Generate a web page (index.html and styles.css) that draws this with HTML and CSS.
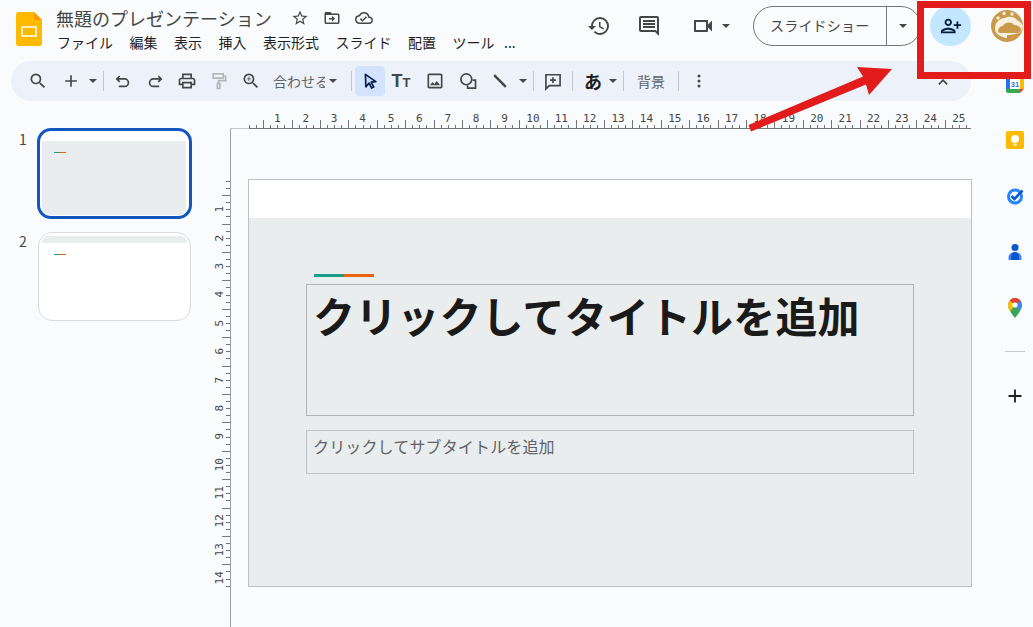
FILE: index.html
```html
<!DOCTYPE html>
<html lang="ja">
<head>
    <meta charset="UTF-8">
    <meta name="viewport" content="width=device-width, initial-scale=1.0">
    <title>無題のプレゼンテーション</title>
    <link rel="stylesheet" href="styles.css">
</head>
<body>
    <header class="header">
        <svg class="logo" viewBox="0 0 26 34">
            <path fill="#ffba00" d="M3 0h15l8 8v23a3 3 0 0 1-3 3H3a3 3 0 0 1-3-3V3a3 3 0 0 1 3-3z"/>
            <path fill="#f79a00" d="M18 0l8 8h-8z"/>
            <rect x="6" y="15" width="14" height="9" fill="none" stroke="#ffeeb8" stroke-width="2"/>
        </svg>
        <div class="doc-info">
            <div class="doc-title-row">
                <span class="doc-title">無題のプレゼンテーション</span>
                <svg class="doc-icon doc-icon-first" viewBox="0 0 24 24"><path d="M22 9.24l-7.19-.62L12 2 9.19 8.63 2 9.24l5.46 4.73L5.82 21 12 17.27 18.18 21l-1.63-7.03L22 9.24zM12 15.4l-3.76 2.27 1-4.28-3.32-2.88 4.38-.38L12 6.1l1.71 4.04 4.38.38-3.32 2.88 1 4.28L12 15.4z"/></svg>
                <svg class="doc-icon" viewBox="0 0 24 24"><path d="M20 6h-8l-2-2H4c-1.1 0-2 .9-2 2v12c0 1.1.9 2 2 2h16c1.1 0 2-.9 2-2V8c0-1.1-.9-2-2-2zm0 12H4V8h16v10zM12 9l4 4-4 4v-3H8v-2h4z"/></svg>
                <svg class="doc-icon" viewBox="0 0 24 24"><path d="M19.35 10.04A7.49 7.49 0 0 0 12 4C9.11 4 6.6 5.64 5.35 8.04A5.994 5.994 0 0 0 0 14c0 3.31 2.69 6 6 6h13c2.76 0 5-2.24 5-5 0-2.64-2.05-4.78-4.65-4.96zM19 18H6c-2.21 0-4-1.79-4-4 0-2.05 1.53-3.76 3.56-3.97l1.07-.11.5-.95A5.469 5.469 0 0 1 12 6c2.62 0 4.88 1.86 5.39 4.43l.3 1.5 1.53.11A2.98 2.98 0 0 1 22 15c0 1.65-1.35 3-3 3zm-9-3.82l-2.09-2.09L6.5 13.5 10 17l6.01-6.01-1.41-1.41z"/></svg>
            </div>
            <nav class="menu">
                <span>ファイル</span>
                <span>編集</span>
                <span>表示</span>
                <span>挿入</span>
                <span>表示形式</span>
                <span>スライド</span>
                <span>配置</span>
                <span>ツール</span>
                <span class="menu-more">...</span>
            </nav>
        </div>
        <div class="header-actions">
            <svg class="action-icon" viewBox="0 0 24 24"><path d="M13 3a9 9 0 0 0-9 9H1l3.89 3.89.07.14L9 12H6c0-3.87 3.13-7 7-7s7 3.13 7 7-3.13 7-7 7c-1.93 0-3.68-.79-4.94-2.06l-1.42 1.42A8.954 8.954 0 0 0 13 21a9 9 0 0 0 0-18zm-1 5v5l4.28 2.54.72-1.21-3.5-2.08V8H12z"/></svg>
            <svg class="action-icon action-comment" viewBox="0 0 24 24"><path d="M20 4v13.17L18.83 16H4V4h16m0-2H4c-1.1 0-2 .9-2 2v12c0 1.1.9 2 2 2h14l4 4V4c0-1.1-.9-2-2-2zM6 12h12v2H6zM6 9h12v2H6zM6 6h12v2H6z"/></svg>
            <svg class="action-icon action-video" viewBox="0 0 24 24"><path d="M15 8v8H5V8h10m1-2H4c-.55 0-1 .45-1 1v10c0 .55.45 1 1 1h12c.55 0 1-.45 1-1v-3.5l4 4v-11l-4 4V7c0-.55-.45-1-1-1z"/></svg>
            <span class="caret action-caret"></span>
            <div class="slideshow">
                <span class="slideshow-label">スライドショー</span>
                <span class="slideshow-more"><span class="caret"></span></span>
            </div>
            <div class="share">
                <svg viewBox="0 0 24 24"><path transform="matrix(-1 0 0 1 24 0)" d="M15 12c2.21 0 4-1.79 4-4s-1.79-4-4-4-4 1.79-4 4 1.79 4 4 4zm0-6c1.1 0 2 .9 2 2s-.9 2-2 2-2-.9-2-2 .9-2 2-2zm0 8c-2.67 0-8 1.34-8 4v2h16v-2c0-2.66-5.33-4-8-4zm-6 4c.22-.72 3.31-2 6-2 2.7 0 5.8 1.29 6 2H9zm-3-3v-3h3v-2H6V7H4v3H1v2h3v3h2z"/></svg>
            </div>
            <svg class="avatar" viewBox="0 0 32 32">
                <circle cx="16" cy="16" r="16" fill="#c99a4b"/>
                <circle cx="7" cy="8" r="1.700" fill="#f8f0de"/>
                <circle cx="13" cy="3.500" r="1.700" fill="#f8f0de"/>
                <circle cx="21" cy="4" r="1.700" fill="#f8f0de"/>
                <path fill="#f8f0de" d="M4 19c0-7 5-11 10-11 3-2 9-2 12 2 2 1 5 3 6 6l-2 6-6 4c-4 2-9 3-12 1-4-1-8-4-8-8z"/>
                <path fill="#c99a4b" d="M7 21c0-3 3-5 5-5 1-4 9-5 11-1 3 0 7 1 7 5 0 2-2 3-4 3H11c-2 0-4-0-4-2z"/>
                <path fill="#c99a4b" d="M16 25c4 0 10-1 14-3-2 6-8 9-14 9z"/>
            </svg>
        </div>
    </header>

    <div class="app">
        <div class="main">
            <div class="toolbar">
                <span class="tool"><svg viewBox="0 0 24 24"><path d="M15.5 14h-.79l-.28-.27A6.471 6.471 0 0 0 16 9.5 6.5 6.5 0 1 0 9.5 16c1.61 0 3.09-.59 4.23-1.57l.27.28v.79l5 4.99L20.49 19l-4.99-5zm-6 0C7.01 14 5 11.99 5 9.5S7.01 5 9.5 5 14 7.01 14 9.5 11.99 14 9.5 14z"/></svg></span>
                <span class="tool tool-add"><svg viewBox="0 0 24 24"><path d="M19 13h-6v6h-2v-6H5v-2h6V5h2v6h6v2z"/></svg></span>
                <span class="tool-caret"><span class="caret"></span></span>
                <span class="sep"></span>
                <span class="tool"><svg class="stroke-icon" viewBox="0 0 24 24"><path d="M8 6L4.5 9.5 8 13M5 9.5h9a4.5 4.5 0 0 1 0 9H7"/></svg></span>
                <span class="tool"><svg class="stroke-icon" viewBox="0 0 24 24"><path d="M16 6l3.500 3.500L16 13M19 9.500h-9a4.500 4.500 0 0 0 0 9h7"/></svg></span>
                <span class="tool"><svg viewBox="0 0 24 24"><path d="M19 8h-1V3H6v5H5c-1.660 0-3 1.340-3 3v6h4v4h12v-4h4v-6c0-1.660-1.340-3-3-3zM8 5h8v3H8V5zm8 12v2H8v-4h8v2zm2-2v-2H6v2H4v-4c0-.55.45-1 1-1h14c.55 0 1 .45 1 1v4h-2z"/></svg></span>
                <span class="tool tool-disabled"><svg class="stroke-icon" viewBox="0 0 24 24"><path d="M5 3.500h12v5H5zM17 6h3v5.500h-8.500V15M10 15h3v6h-3z"/></svg></span>
                <span class="tool"><svg viewBox="0 0 24 24"><path d="M15.500 14h-.79l-.28-.27A6.471 6.471 0 0 0 16 9.500 6.500 6.500 0 1 0 9.500 16c1.610 0 3.090-.59 4.230-1.570l.27.28v.79l5 4.990L20.490 19l-4.990-5zm-6 0C7.010 14 5 11.990 5 9.500S7.010 5 9.500 5 14 7.010 14 9.500 11.990 14 9.500 14zM12 10h-2v2H9v-2H7V9h2V7h1v2h2v1z"/></svg></span>
                <span class="zoom-label">合わせる</span>
                <span class="tool-caret tool-caret-zoom"><span class="caret"></span></span>
                <span class="sep sep-wide"></span>
                <span class="tool tool-select"><svg viewBox="0 0 24 24"><path fill="#c2d7fa" stroke="#041e49" stroke-width="2" stroke-linejoin="round" d="M6.500 4l.5 15 4-4.500 3 6 2.500-1.200-3-6 5.500-.5z"/></svg></span>
                <span class="tool tool-text"><span class="text-big">T</span><span class="text-small">T</span></span>
                <span class="tool tool-image"><svg viewBox="0 0 24 24"><path d="M19 5v14H5V5h14m0-2H5c-1.100 0-2 .9-2 2v14c0 1.100.9 2 2 2h14c1.100 0 2-.9 2-2V5c0-1.100-.9-2-2-2zm-4.860 8.860l-3 3.870L9 13.140 6 17h12l-3.860-5.140z"/></svg></span>
                <span class="tool tool-shape"><svg class="stroke-icon" viewBox="0 0 24 24"><circle cx="10" cy="10" r="6.500"/><path d="M17.500 11H21v9.500h-9.500V17"/></svg></span>
                <span class="tool"><svg class="stroke-icon" viewBox="0 0 24 24"><path class="line-tool" d="M5 5l14 14"/></svg></span>
                <span class="tool-caret tool-caret-line"><span class="caret"></span></span>
                <span class="sep"></span>
                <span class="tool"><svg class="stroke-icon" viewBox="0 0 24 24"><path d="M3.500 4.500h17v13H7.500l-4 4zM12 7.500v7M8.500 11h7"/></svg></span>
                <span class="sep sep-tight"></span>
                <span class="tool tool-lang">あ</span>
                <span class="tool-caret tool-caret-lang"><span class="caret"></span></span>
                <span class="sep sep-before-bg"></span>
                <span class="bg-label">背景</span>
                <span class="sep sep-after-bg"></span>
                <span class="tool"><svg viewBox="0 0 24 24"><circle cx="12" cy="6" r="1.800"/><circle cx="12" cy="12" r="1.800"/><circle cx="12" cy="18" r="1.800"/></svg></span>
                <span class="tool tool-collapse"><svg class="stroke-icon" viewBox="0 0 24 24"><path d="M7 16l5-5 5 5"/></svg></span>
            </div>

            <div class="workspace">
                <aside class="filmstrip">
                    <div class="thumb-row">
                        <span class="thumb-num">1</span>
                        <div class="thumb thumb-active">
                            <div class="thumb-fill"><div class="thumb-accent"></div></div>
                        </div>
                    </div>
                    <div class="thumb-row thumb-row-second">
                        <span class="thumb-num">2</span>
                        <div class="thumb thumb-plain">
                            <div class="thumb-band"></div>
                            <div class="thumb-accent"></div>
                        </div>
                    </div>
                </aside>

                <section class="editor">
                    <div class="ruler-top">
                        <div class="ruler-top-scale">
                            <span>1</span><span>2</span><span>3</span><span>4</span><span>5</span>
                            <span>6</span><span>7</span><span>8</span><span>9</span><span>10</span>
                            <span>11</span><span>12</span><span>13</span><span>14</span><span>15</span>
                            <span>16</span><span>17</span><span>18</span><span>19</span><span>20</span>
                            <span>21</span><span>22</span><span>23</span><span>24</span><span>25</span>
                        </div>
                    </div>
                    <div class="editor-body">
                        <div class="ruler-left">
                            <div class="ruler-left-scale">
                                <span>1</span><span>2</span><span>3</span><span>4</span><span>5</span>
                                <span>6</span><span>7</span><span>8</span><span>9</span><span>10</span>
                                <span>11</span><span>12</span><span>13</span><span>14</span>
                            </div>
                        </div>
                        <div class="stage">
                            <div class="slide">
                                <div class="slide-top"></div>
                                <div class="slide-content">
                                    <div class="accent"><span class="accent-teal"></span><span class="accent-orange"></span></div>
                                    <div class="title-box">クリックしてタイトルを追加</div>
                                    <div class="subtitle-box">クリックしてサブタイトルを追加</div>
                                </div>
                            </div>
                        </div>
                    </div>
                </section>
            </div>
        </div>

        <aside class="sidepanel">
            <div class="side-item">
                <svg viewBox="0 0 18 18">
                    <rect x="0" y="0" width="18" height="18" rx="2" fill="#fff"/>
                    <path fill="#2f6fed" d="M2 0h12v4H4v10H0V2a2 2 0 0 1 2-2z"/>
                    <path fill="#fbbc04" d="M14 0h2a2 2 0 0 1 2 2v12h-4z"/>
                    <path fill="#34a853" d="M0 14h14v4H2a2 2 0 0 1-2-2z"/>
                    <path fill="#ea4335" d="M14 14h4l-4 4z"/>
                    <text x="9" y="11.500" class="cal-text">31</text>
                </svg>
            </div>
            <div class="side-item">
                <svg viewBox="0 0 18 18">
                    <rect width="18" height="18" rx="2" fill="#ffba00"/>
                    <circle cx="9" cy="8" r="4" fill="#fff"/>
                    <rect x="7.500" y="12.800" width="3" height="1.700" fill="#fff"/>
                </svg>
            </div>
            <div class="side-item">
                <svg viewBox="0 0 18 18">
                    <circle cx="9" cy="9.500" r="6.500" fill="none" stroke="#2684fc" stroke-width="3"/>
                    <path d="M5.500 9l3 3L16.500 3.500" fill="none" stroke="#0b57d0" stroke-width="2.600"/>
                </svg>
            </div>
            <div class="side-item">
                <svg viewBox="0 0 18 18">
                    <circle cx="9" cy="4.500" r="3.500" fill="#0b57d0"/>
                    <path fill="#4285f4" d="M2.500 17v-2.500C2.500 11 6 9 9 9s6.500 2 6.500 5.500V17z"/>
                    <path fill="#0b57d0" d="M5 17v-4c0-2 2-4 4-4s4 2 4 4v4z"/>
                </svg>
            </div>
            <div class="side-item">
                <svg viewBox="0 0 18 20">
                    <clipPath id="pin"><path d="M9 0a7 7 0 0 0-7 7c0 5 7 13 7 13s7-8 7-13a7 7 0 0 0-7-7z"/></clipPath>
                    <g clip-path="url(#pin)">
                        <rect width="18" height="20" fill="#34a853"/>
                        <path fill="#4285f4" d="M9 7L18 0v9l-6 3z"/>
                        <path fill="#ea4335" d="M9 7L3 2l6-4 9 2z"/>
                        <path fill="#fbbc04" d="M9 7L3 2-1 5v9l4 1z"/>
                    </g>
                    <circle cx="9" cy="7" r="2.600" fill="#fff"/>
                </svg>
            </div>
            <div class="side-divider"></div>
            <svg class="side-plus" viewBox="0 0 24 24"><path d="M19 13h-6v6h-2v-6H5v-2h6V5h2v6h6v2z"/></svg>
        </aside>
    </div>

    <!-- annotation drawn over the screenshot -->
    <div class="mark-box"></div>
    <svg class="mark-arrow" viewBox="0 0 1033 627">
        <path d="M751 131.500L748.500 125 863 76.500 857 67 892 69 869 95 866 84.500z"/>
    </svg>
</body>
</html>
```

FILE: styles.css
```css
* {
    box-sizing: border-box;
}

html, body {
    height: 100%;
}

body {
    margin: 0;
    display: flex;
    flex-direction: column;
    overflow: hidden;
    position: relative;
    background-color: #f9fbfd;
    color: #1f1f1f;
    font-family: 'Noto Sans CJK JP', 'Noto Sans', sans-serif;
}

svg {
    display: block;
}

.caret {
    display: block;
    width: 0;
    height: 0;
    border-left: 4.5px solid transparent;
    border-right: 4.5px solid transparent;
    border-top: 4.5px solid #444746;
}

/* header */
.header {
    display: flex;
    height: 56px;
    padding: 0 10px 0 16px;
    flex-shrink: 0;
}

.logo {
    width: 26px;
    height: 34px;
    margin-top: 12px;
}

.doc-info {
    margin-left: 14px;
}

.doc-title-row {
    display: flex;
    align-items: center;
    height: 24px;
    margin-top: 6px;
}

.doc-title {
    font-size: 18px;
    line-height: 24px;
    color: #444746;
}

.doc-icon {
    width: 18px;
    height: 18px;
    margin-left: 14px;
    fill: #444746;
}

.doc-icon-first {
    margin-left: 19px;
}

.menu {
    display: flex;
    gap: 16.5px;
    margin-top: 2px;
    margin-left: 1px;
    font-size: 14px;
    line-height: 20px;
    white-space: nowrap;
}

.menu-more {
    margin-left: -7px;
}

.header-actions {
    display: flex;
    align-items: center;
    height: 52px;
    margin-left: auto;
}

.action-icon {
    width: 24px;
    height: 24px;
    fill: #444746;
}

.action-comment {
    margin-left: 26px;
}

.action-video {
    margin-left: 30px;
}

.action-caret {
    margin-left: 7px;
}

.slideshow {
    display: flex;
    align-items: center;
    width: 168px;
    height: 40px;
    margin-left: 23px;
    border: 1px solid #747775;
    border-radius: 20px;
}

.slideshow-label {
    width: 133px;
    padding-left: 16px;
    font-size: 14px;
    letter-spacing: 0.2px;
    line-height: 36px;
    height: 38px;
    color: #444746;
    border-right: 1px solid #747775;
}

.slideshow-more {
    padding-left: 12px;
}

.share {
    display: flex;
    align-items: center;
    justify-content: center;
    width: 41px;
    height: 40px;
    margin-left: 9px;
    border-radius: 50%;
    background-color: #c2e7ff;
    fill: #001d35;
}

.share svg {
    width: 22px;
    height: 22px;
}

.avatar {
    width: 32px;
    height: 32px;
    margin-left: 20px;
}

/* page below the header */
.app {
    display: flex;
    flex: 1;
    min-height: 0;
}

.main {
    display: flex;
    flex-direction: column;
    width: 972px;
}

/* toolbar */
.toolbar {
    display: flex;
    align-items: center;
    width: 960px;
    height: 40px;
    margin: 5px 0 0 11px;
    padding: 0 12px 0 11px;
    flex-shrink: 0;
    border-radius: 20px;
    background-color: #edf2fa;
    color: #444746;
}

.tool {
    display: flex;
    align-items: center;
    justify-content: center;
    width: 32px;
    height: 30px;
    flex-shrink: 0;
    fill: #444746;
}

.tool svg {
    width: 20px;
    height: 20px;
}

.stroke-icon {
    fill: none;
    stroke: #444746;
    stroke-width: 2;
}

.line-tool {
    stroke-width: 3;
}

.tool-add {
    margin-left: 1px;
}

.tool-disabled .stroke-icon {
    stroke: #b4b7b9;
}

.tool-caret {
    display: flex;
    justify-content: center;
    width: 12px;
    flex-shrink: 0;
}

.tool-caret-zoom {
    margin-left: 2px;
}

.tool-caret-line {
    margin-left: 1px;
}

.tool-caret-lang {
    margin-left: -2px;
}

.sep {
    width: 1px;
    height: 20px;
    margin: 0 3px 0 4px;
    flex-shrink: 0;
    background-color: #c7c7c7;
}

.sep-wide {
    margin-left: 12px;
}

.sep-tight {
    margin: 0 4px 0 3px;
}

.sep-before-bg {
    margin: 0 13px 0 4px;
}

.sep-after-bg {
    margin: 0 4px 0 13px;
}

.zoom-label {
    width: 52px;
    margin-left: 6px;
    overflow: hidden;
    font-size: 14px;
    white-space: nowrap;
    color: #5f6368;
}

.tool-select {
    width: 30px;
    border-radius: 4px;
    background-color: #d3e3fd;
}

.tool-text {
    align-items: baseline;
    padding-top: 5px;
    font-family: 'Liberation Sans', sans-serif;
    font-weight: bold;
}

.text-big {
    font-size: 18px;
}

.text-small {
    font-size: 13px;
}

.tool-image {
    margin-left: 2px;
}

.tool-shape {
    margin-left: 1px;
}

.tool-lang {
    font-size: 18px;
    font-weight: bold;
    color: #1f1f1f;
}

.bg-label {
    width: 28px;
    font-size: 14px;
    white-space: nowrap;
    color: #5f6368;
}

.tool-collapse {
    margin-left: auto;
}

/* workspace */
.workspace {
    display: flex;
    flex: 1;
    min-height: 0;
}

.filmstrip {
    width: 213px;
    padding: 27px 0 0 19px;
    flex-shrink: 0;
}

.thumb-row {
    display: flex;
}

.thumb-row-second {
    margin-top: 13px;
}

.thumb-num {
    width: 18px;
    margin-top: 1px;
    font-size: 14px;
    line-height: 20px;
    color: #444746;
}

.thumb-row-second .thumb-num {
    margin-top: -1px;
}

.thumb {
    border-radius: 14px;
    background-color: #fff;
    overflow: hidden;
}

.thumb-active {
    width: 155px;
    height: 91px;
    padding: 10px 3px 1px 2px;
    border: 3px solid #1257c0;
}

.thumb-fill {
    height: 100%;
    padding-top: 11px;
    background-color: #e9eded;
    border-radius: 0 0 8px 8px;
}

.thumb-plain {
    width: 153px;
    height: 89px;
    margin-left: 1px;
    padding: 3px 3px 0;
    border: 1px solid #dadce0;
}

.thumb-band {
    height: 7px;
    margin-bottom: 11px;
    background-color: #e9eded;
    border-radius: 6px 6px 0 0;
}

.thumb-accent {
    width: 12px;
    height: 1px;
    margin-left: 12px;
    background: linear-gradient(90deg, #1a9e8a 50%, #e8650c 50%);
}

/* rulers and slide */
.editor {
    display: flex;
    flex-direction: column;
    flex: 1;
    min-width: 0;
}

.ruler-top {
    height: 28px;
    margin-left: 17px;
    padding-left: 19px;
    flex-shrink: 0;
    background: linear-gradient(#c4c7c5, #c4c7c5) left bottom / 19px 1px no-repeat;
}

.ruler-top-scale {
    display: flex;
    width: 722px;
    height: 28px;
    padding: 11px 0 0 14.2px;
    font-family: 'DejaVu Sans Mono', 'Liberation Mono', monospace;
    font-size: 11px;
    line-height: 14px;
    color: #444746;
    background:
        linear-gradient(#757575, #757575) left bottom / 100% 1px no-repeat,
        repeating-linear-gradient(90deg, transparent 0 14.2px, #757575 14.2px 15.2px, transparent 15.2px 28.4px) left bottom / 100% 9px no-repeat,
        repeating-linear-gradient(90deg, #757575 0 1px, transparent 1px 7.1px) left bottom / 100% 4px no-repeat;
}

.ruler-top-scale span {
    width: 28.4px;
    flex-shrink: 0;
    text-align: center;
}

.editor-body {
    display: flex;
    flex: 1;
    min-height: 0;
}

.ruler-left {
    width: 18px;
    padding-top: 52px;
    flex-shrink: 0;
    border-right: 1px solid #9aa0a6;
}

.ruler-left-scale {
    display: flex;
    flex-direction: column;
    height: 407px;
    padding-top: 14.2px;
    font-family: 'DejaVu Sans Mono', 'Liberation Mono', monospace;
    font-size: 11px;
    color: #444746;
    background:
        repeating-linear-gradient(180deg, transparent 0 14.2px, #757575 14.2px 15.2px, transparent 15.2px 28.4px) right top / 8px 100% no-repeat,
        repeating-linear-gradient(180deg, #757575 0 1px, transparent 1px 7.1px) right top / 4px 100% no-repeat;
}

.ruler-left-scale span {
    display: block;
    width: 16px;
    height: 28.4px;
    flex-shrink: 0;
    line-height: 14px;
    text-align: center;
    writing-mode: vertical-rl;
    transform: rotate(180deg);
}

.stage {
    flex: 1;
    padding: 50px 0 0 17px;
}

.slide {
    display: flex;
    flex-direction: column;
    width: 724px;
    height: 408px;
    border: 1px solid #bdc1c6;
    background-color: #fff;
}

.slide-top {
    height: 38px;
    flex-shrink: 0;
}

.slide-content {
    flex: 1;
    padding: 56px 57px 0;
    background-color: #e9eded;
}

.accent {
    display: flex;
    height: 3px;
    margin: 0 0 7px 8px;
}

.accent-teal,
.accent-orange {
    width: 30px;
}

.accent-teal {
    background-color: #1a9e8a;
}

.accent-orange {
    background-color: #e8650c;
}

.title-box {
    height: 132px;
    padding: 3px 6px;
    border: 1px solid #b0b3b3;
    font-size: 42px;
    font-weight: bold;
    letter-spacing: 0.15px;
    line-height: 54px;
    white-space: nowrap;
    color: #1a1a1a;
}

.subtitle-box {
    height: 44px;
    margin-top: 14px;
    padding: 3px 6px;
    border: 1px solid #bdc1c1;
    font-size: 16px;
    letter-spacing: 0.15px;
    line-height: 24px;
    color: #5f6368;
}

/* side panel */
.sidepanel {
    display: flex;
    flex-direction: column;
    align-items: center;
    width: 61px;
    padding-left: 25px;
}

.side-item {
    display: flex;
    align-items: center;
    justify-content: center;
    height: 56px;
    flex-shrink: 0;
}

.side-item svg {
    width: 18px;
    height: 18px;
}

.side-item:nth-child(5) svg {
    height: 20px;
}

.cal-text {
    font-family: 'Liberation Sans', sans-serif;
    font-size: 7.500px;
    font-weight: bold;
    text-anchor: middle;
    fill: #2f6fed;
}

.side-divider {
    width: 20px;
    height: 1px;
    margin-top: 15px;
    background-color: #c7c7c7;
}

.side-plus {
    width: 22px;
    height: 22px;
    margin-top: 33px;
    flex-shrink: 0;
    fill: #1f1f1f;
}

/* red annotation */
.mark-box {
    position: absolute;
    left: 917px;
    top: 1px;
    width: 114px;
    height: 78px;
    border: 7px solid #e21b1b;
}

.mark-arrow {
    position: absolute;
    left: 0;
    top: 0;
    width: 1033px;
    height: 627px;
    fill: #e21b1b;
    pointer-events: none;
}
```
